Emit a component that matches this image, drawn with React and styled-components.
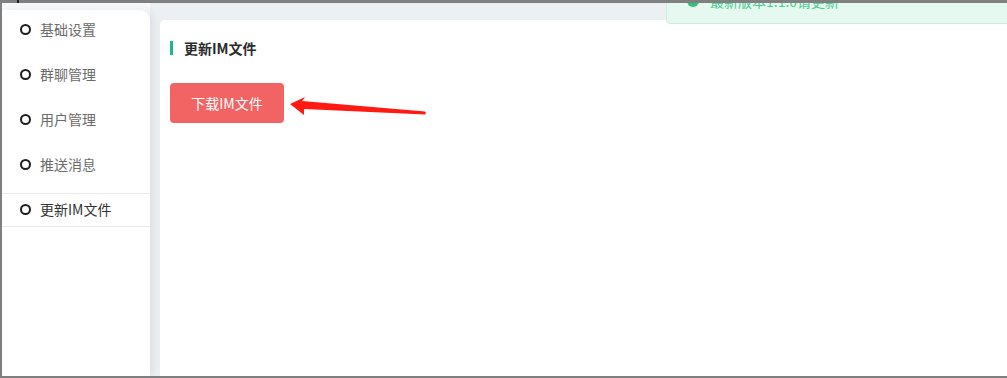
import React from "react";
import styled, { createGlobalStyle } from "styled-components";

const GlobalStyle = createGlobalStyle`
  html, body { margin: 0; padding: 0; background: #ffffff; }
  body { font-family: "Noto Sans CJK SC", "Noto Sans", "Liberation Sans", sans-serif; }
  * { box-sizing: border-box; }
`;

const Frame = styled.div`
  position: relative;
  width: 1007px;
  height: 378px;
  display: flex;
  flex-direction: column;
  border-left: 2px solid #7f7f7f;
  border-bottom: 2px solid #7f7f7f;
  background: #f8f9fa;
  overflow: hidden;
`;

const TopBar = styled.div`
  position: relative;
  z-index: 3;
  height: 3px;
  flex: none;
  background: #808080;
  &::before {
    content: "";
    position: absolute;
    left: 15px;
    top: 0;
    width: 2px;
    height: 3px;
    background: #1f1f1f;
  }
`;

const Body = styled.div`
  flex: 1;
  display: flex;
  min-height: 0;
`;

const Sidebar = styled.nav`
  position: relative;
  z-index: 1;
  width: 148px;
  flex: none;
  margin-top: 7px;
  background: #ffffff;
  border-top-right-radius: 10px;
  box-shadow: 3px 0 8px rgba(40, 50, 70, 0.09);
`;

const MenuList = styled.ul`
  list-style: none;
  margin: 0;
  padding: 0;
  display: flex;
  flex-direction: column;
  gap: 5px;
`;

const MenuItem = styled.li`
  display: flex;
  align-items: center;
  height: ${(p) => (p.$active ? "34px" : "40px")};
  margin: ${(p) => (p.$active ? "3px 0" : "0")};
  padding-left: 18px;
  padding-bottom: 2px;
  border-top: ${(p) => (p.$active ? "1px solid #e9eaec" : "none")};
  border-bottom: ${(p) => (p.$active ? "1px solid #e9eaec" : "none")};
  font-size: 14px;
  color: ${(p) => (p.$active ? "#333333" : "#6b6b6b")};
`;

const Ring = styled.span`
  width: 11px;
  height: 11px;
  border: 2px solid #1e1e1e;
  border-radius: 50%;
  margin-right: 9px;
  flex: none;
`;

const Main = styled.main`
  flex: 1;
  display: flex;
  background: #edf0f3;
  padding: 17px 0 0 10px;
`;

const Card = styled.section`
  position: relative;
  flex: 1;
  background: #ffffff;
  border-top-left-radius: 5px;
  padding: 20px 10px;
`;

const Header = styled.div`
  display: flex;
  align-items: center;
  height: 16px;
  gap: 11px;
  margin-bottom: 27px;
`;

const Accent = styled.span`
  width: 3px;
  height: 14px;
  background: #1fb48c;
`;

const Title = styled.h2`
  margin: 0;
  font-size: 14px;
  font-weight: 700;
  color: #2b2b2b;
`;

const DownloadButton = styled.button`
  width: 114px;
  height: 40px;
  border: none;
  border-radius: 4px;
  background: #f26464;
  color: #ffffff;
  font-family: inherit;
  font-size: 14px;
  cursor: pointer;
`;

const ArrowMark = styled.svg`
  position: absolute;
  left: 0;
  top: 0;
  width: 300px;
  height: 120px;
  pointer-events: none;
`;

const Toast = styled.div`
  position: absolute;
  z-index: 2;
  left: 664px;
  top: -22px;
  width: 420px;
  height: 46px;
  display: flex;
  align-items: center;
  gap: 11px;
  padding-left: 20px;
  background: #e6f9f0;
  border: 1px solid #c9f0dd;
  border-radius: 4px;
  color: #4ccb93;
  font-size: 14px;
`;

const ToastIcon = styled.span`
  width: 12px;
  height: 12px;
  border-radius: 50%;
  background: #2fc07c;
  flex: none;
`;

const items = ["基础设置", "群聊管理", "用户管理", "推送消息", "更新IM文件"];

export default function App() {
  return (
    <>
      <GlobalStyle />
      <Frame>
        <TopBar />
        <Toast>
          <ToastIcon />
          <span>最新版本1.1.0请更新</span>
        </Toast>
        <Body>
          <Sidebar>
            <MenuList>
              {items.map((t, i) => (
                <MenuItem key={t} $active={i === 4}>
                  <Ring />
                  {t}
                </MenuItem>
              ))}
            </MenuList>
          </Sidebar>
          <Main>
            <Card>
              <Header>
                <Accent />
                <Title>更新IM文件</Title>
              </Header>
              <DownloadButton>下载IM文件</DownloadButton>
              <ArrowMark viewBox="0 0 300 120">
                <polygon
                  points="130,84 145,77 142,81 265,91.5 266,93 265,94.5 144,89 144,95"
                  fill="#ff1a12"
                />
              </ArrowMark>
            </Card>
          </Main>
        </Body>
      </Frame>
    </>
  );
}
